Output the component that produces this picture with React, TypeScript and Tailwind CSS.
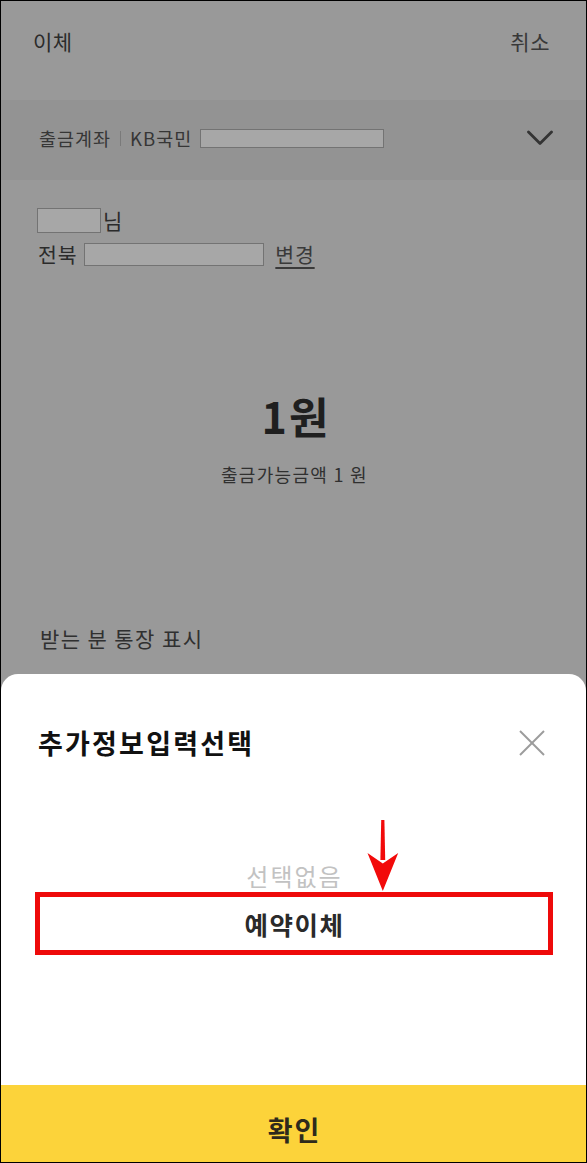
import React from "react";

function Chevron() {
  return (
    <svg width="26" height="16" viewBox="0 0 26 16" fill="none">
      <polyline points="1.5,2 13,13.5 24.5,2" stroke="#343434" strokeWidth="2.8" strokeLinecap="round" strokeLinejoin="round" />
    </svg>
  );
}

function CloseIcon() {
  return (
    <svg width="26" height="26" viewBox="0 0 26 26" fill="none">
      <line x1="1" y1="1" x2="25" y2="25" stroke="#9c9c9c" strokeWidth="2" />
      <line x1="25" y1="1" x2="1" y2="25" stroke="#9c9c9c" strokeWidth="2" />
    </svg>
  );
}

function DownArrow() {
  return (
    <svg width="32" height="72" viewBox="0 0 32 72">
      <path d="M14.2 0 L17.4 0 L18.2 40 L13.4 40 Z" fill="#f20a0a" />
      <path d="M0.5 33 L15.8 43.5 L31.2 33 L15.8 71 Z" fill="#f20a0a" />
    </svg>
  );
}

function Masked({ className }: { className: string }) {
  return <span className={`inline-block border border-[#737373] bg-[#a7a7a7] ${className}`} />;
}

export default function App() {
  return (
    <div className="relative h-[1163px] w-[587px] overflow-hidden border border-black bg-[#999999] font-['Noto_Sans_CJK_KR',sans-serif] text-[#2b2b2b]">
      {/* top bar */}
      <div className="flex h-[99px] items-start justify-between px-[32px] pt-[29px] pr-[36px]">
        <span className="text-[21px] leading-[22px] tracking-[0.5px]">이체</span>
        <span className="text-[21px] leading-[22px] tracking-[0.5px] text-[#383838]">취소</span>
      </div>

      {/* withdrawal account */}
      <div className="flex h-[80px] items-center justify-between bg-[#939393] pb-[4px] pl-[38px] pr-[33px]">
        <div className="flex items-center text-[18.5px] leading-[22px] tracking-[1px] text-[#363636]">
          <span>출금계좌</span>
          <span className="mx-[9px] h-[15px] w-px bg-[#7a7a7a]" />
          <span>KB국민</span>
          <Masked className="ml-[8px] h-[19px] w-[184px]" />
        </div>
        <Chevron />
      </div>

      {/* recipient */}
      <div className="px-[36px] pt-[27px]">
        <div className="flex h-[26px] items-center">
          <Masked className="h-[25px] w-[64px]" />
          <span className="ml-[2px] text-[21px] leading-[24px]">님</span>
        </div>
        <div className="mt-[9px] flex h-[24px] items-center">
          <span className="ml-[1px] text-[20.5px] leading-[24px] tracking-[0.8px]">전북</span>
          <Masked className="ml-[7px] h-[23px] w-[180px]" />
          <span className="ml-[11px] text-[20.5px] leading-[24px] tracking-[0.8px] text-[#3a3a3a] underline underline-offset-[4px]">변경</span>
        </div>
      </div>

      {/* amount */}
      <div className="mt-[127px] flex flex-col items-center">
        <span className="pl-[5px] text-[43px] font-bold leading-[44px] tracking-[2px] text-[#1f1f1f]">1원</span>
        <span className="mt-[25px] pl-[2px] text-[18px] leading-[24px] tracking-[1.3px] text-[#303030]">출금가능금액 1 원</span>
      </div>

      <div className="mt-[139px] pl-[39px] text-[21px] leading-[26px] tracking-[1.4px] text-[#303030]">받는 분 통장 표시</div>

      {/* bottom sheet */}
      <div className="absolute inset-x-0 bottom-0 top-[673px] flex flex-col rounded-t-[17px] bg-white">
        <div className="flex items-center justify-between pl-[37px] pr-[41px] pt-[53px]">
          <span className="text-[27px] font-bold leading-[32px] tracking-[2.2px] text-[#111111]">추가정보입력선택</span>
          <CloseIcon />
        </div>

        <div className="mt-[104px] pl-[2px] text-center text-[24px] leading-[26px] tracking-[2px] text-[#c2c2c2]">선택없음</div>
        <div className="ml-[34px] mr-[33px] mt-[3px] flex h-[63px] items-center justify-center border-[5px] border-[#ee0a0a]">
          <span className="pl-[1px] text-[25.5px] font-bold leading-[28px] tracking-[1.5px] text-[#2a2a2a]">예약이체</span>
        </div>

        <div className="flex-1" />
        <button className="flex h-[77px] items-center justify-center bg-[#fcd33a] pt-[12px]">
          <span className="pl-[2px] text-[27px] font-bold leading-[30px] tracking-[2px] text-[#2e2a1c]">확인</span>
        </button>

        <div className="absolute left-[366px] top-[146px]">
          <DownArrow />
        </div>
      </div>
    </div>
  );
}
